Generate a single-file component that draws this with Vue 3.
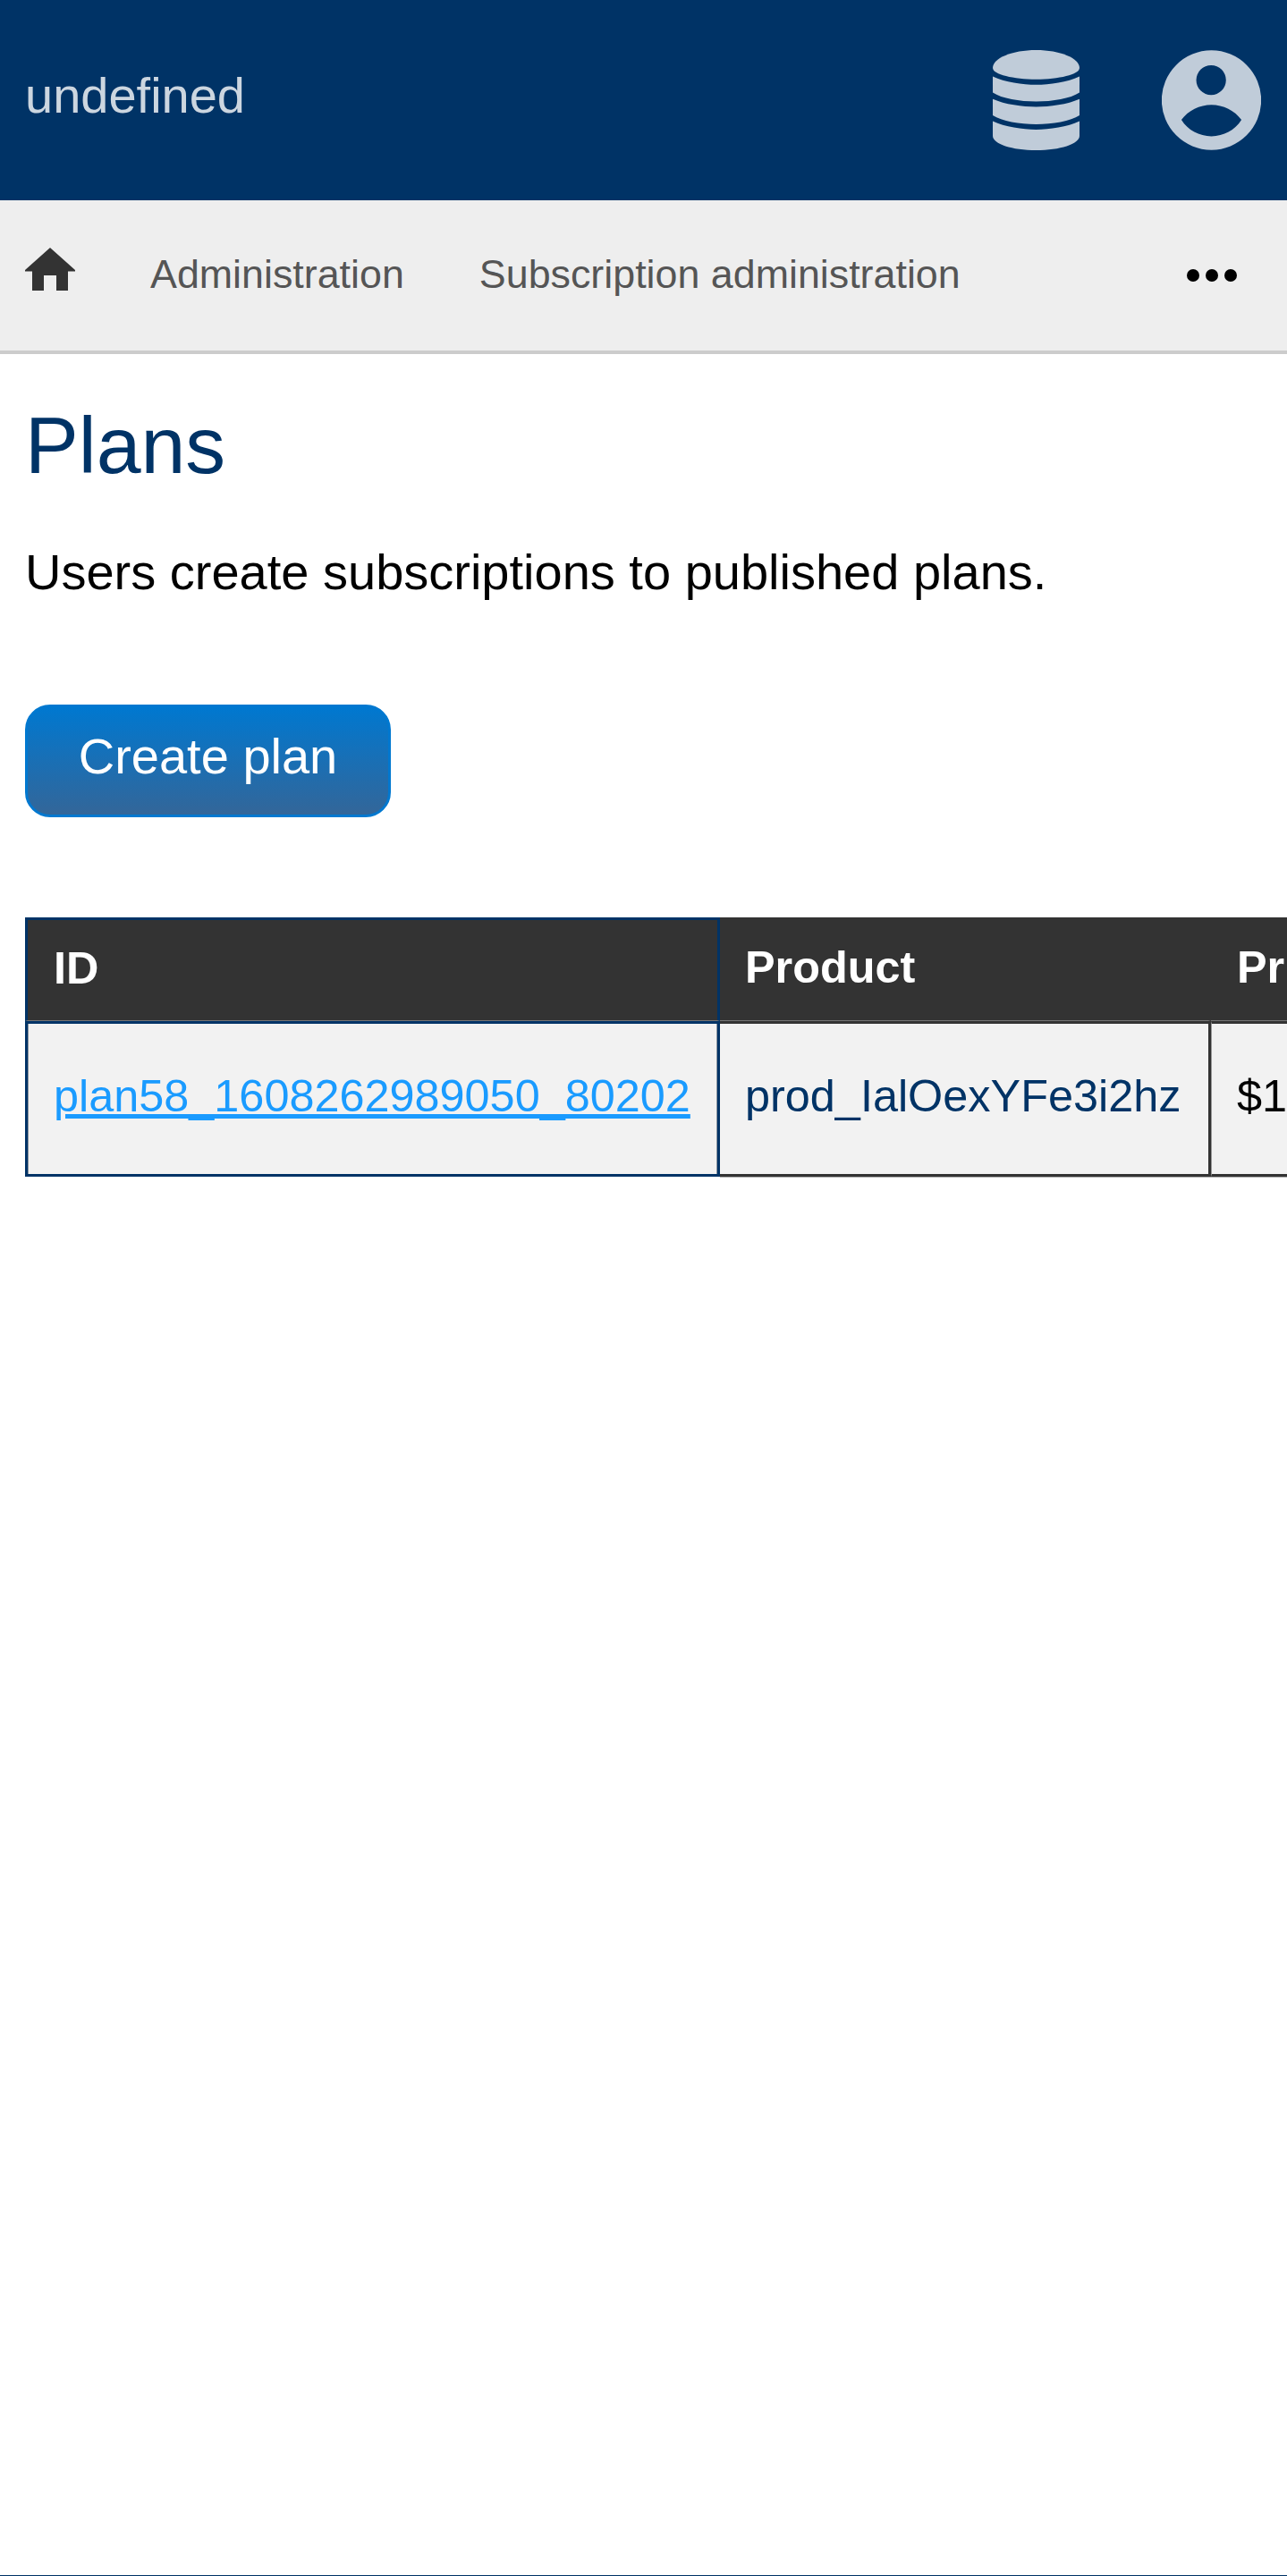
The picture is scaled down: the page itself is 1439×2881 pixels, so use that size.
<script setup>
const link = 'plan58_1608262989050_80202'
</script>

<template>
  <div class="page">
    <header class="top">
      <span class="brand">undefined</span>
      <div class="top-icons">
        <svg class="db" viewBox="210 168 290 335" aria-hidden="true">
          <path d="M210 228C210 195 275 168 355 168S500 195 500 228C500 250 430 266 355 266S210 250 210 228Z" />
          <path d="M210 256C250 275 310 284 355 284S460 275 500 256V310C470 330 410 340 355 340S240 330 210 310Z" />
          <path d="M210 332C250 350 310 358 355 358S460 350 500 332V386C470 405 410 416 355 416S240 405 210 386Z" />
          <path d="M210 406C250 425 310 434 355 434S460 425 500 406V455C500 482 435 503 355 503S210 482 210 455Z" />
        </svg>
        <svg class="user" viewBox="777 168 334 335" aria-hidden="true">
          <path fill-rule="evenodd" d="M944 168A167 167 0 1 1 944 503A167 167 0 1 1 944 168ZM943 218A50 50 0 1 0 943 318A50 50 0 1 0 943 218ZM843 402C865 370 905 351 944 351S1023 370 1045 402C1023 437 985 457 944 457S865 437 843 402Z" />
        </svg>
      </div>
    </header>

    <nav class="crumbs">
      <svg class="home" viewBox="0 0 56 48" aria-hidden="true">
        <path d="M28 0L56 25V26.5H48V48H35V31H21V48H8V26.5H0V25Z" />
      </svg>
      <a class="crumb first">Administration</a>
      <a class="crumb">Subscription administration</a>
      <div class="more" aria-hidden="true"><i></i><i></i><i></i></div>
    </nav>

    <main class="content">
      <h1>Plans</h1>
      <p>Users create subscriptions to published plans.</p>
      <button class="create">Create plan</button>

      <div class="table-wrap">
        <table>
          <thead>
            <tr>
              <th class="id">ID</th>
              <th class="product">Product</th>
              <th class="price">Price</th>
            </tr>
          </thead>
          <tbody>
            <tr>
              <td class="id"><a>{{ link }}</a></td>
              <td class="product">prod_IalOexYFe3i2hz</td>
              <td class="price">$10.00</td>
            </tr>
          </tbody>
        </table>
      </div>
    </main>
  </div>
</template>

<style scoped>
.page {
  width: 1439px;
  height: 2881px;
  overflow: hidden;
  box-sizing: border-box;
  border-bottom: 1px solid #003366;
  font-family: "Liberation Sans", Arial, sans-serif;
  font-size: 56px;
  background: #fff;
  color: #000;
}
.top {
  height: 224px;
  background: #003366;
  display: flex;
  align-items: center;
  justify-content: space-between;
  padding: 0 29px 0 28px;
  box-sizing: border-box;
}
.brand {
  color: #ccd6e0;
  font-size: 56px;
  padding-bottom: 12px;
}
.top-icons {
  display: flex;
  align-items: center;
  gap: 92px;
}
.top-icons svg {
  fill: #c0ccd9;
  display: block;
  height: 112px;
}
.db { width: 97px; }
.user { width: 111px; }

.crumbs {
  height: 172px;
  box-sizing: border-box;
  background: #eeeeee;
  border-bottom: 4px solid #cccccc;
  display: flex;
  align-items: center;
  padding: 0 56px 0 28px;
  font-size: 44.8px;
}
.home {
  width: 56px;
  height: 48px;
  fill: #333333;
  flex: none;
  margin-right: 84px;
  margin-bottom: 14px;
}
.crumb {
  color: #555555;
  margin-right: 84px;
  margin-bottom: 3px;
  white-space: nowrap;
}
.more {
  margin-left: auto;
  display: flex;
  gap: 7px;
}
.more i {
  width: 14px;
  height: 14px;
  border-radius: 50%;
  background: #000;
  display: block;
}
.content {
  padding: 0 28px;
}
h1 {
  margin: 52px 0 0;
  font-size: 89.6px;
  font-weight: 400;
  line-height: 100px;
  color: #003366;
}
p {
  margin: 60px 0 0;
  line-height: 64px;
  font-size: 56px;
}
.create {
  display: block;
  margin-top: 116px;
  width: 409px;
  height: 126px;
  box-sizing: border-box;
  border: 3px solid #0078d0;
  border-radius: 28px;
  background: linear-gradient(#0078d0, #336699);
  color: #fff;
  font: 56px "Liberation Sans", Arial, sans-serif;
  padding: 0 0 12px;
}
.table-wrap {
  margin-top: 112px;
  margin-right: -28px;
  padding-bottom: 1px;
  overflow: hidden;
}
table {
  border-collapse: separate;
  border-spacing: 0;
  font-size: 50.4px;
  white-space: nowrap;
  table-layout: fixed;
  width: 1700px;
}
th {
  background: #333333;
  color: #fff;
  font-weight: 700;
  text-align: left;
  height: 116px;
  padding: 0 30px 4px 29px;
  box-sizing: border-box;
  border-bottom: 1px solid #777777;
  vertical-align: middle;
}
td {
  background: #f2f2f2;
  height: 174px;
  padding: 0 30px 8px 28px;
  box-sizing: border-box;
  border-top: 3px solid #333333;
  border-bottom: 3px solid #333333;
}
th.id {
  width: 777px;
  padding-bottom: 6px;
  border: solid #003366;
  border-width: 3px 3px 1px;
  border-bottom-color: #777777;
}
th.product { width: 549px; border-right: 3px solid #333333; padding-left: 28px; }
td.id {
  border: 3px solid #003366;
  padding-left: 29px;
  box-shadow: inset 1px 0 0 #8a94a0, inset -1px 0 0 #8a94a0;
}
td.id a {
  color: #1a9bff;
  text-decoration: underline;
}
td.product {
  color: #003366;
  border-right: 3px solid #333333;
  box-shadow: 0 1px 0 #aaaaaa;
}
td.price {
  color: #000;
  border-left: 1px solid #999999;
  box-shadow: 0 1px 0 #aaaaaa;
}
</style>
